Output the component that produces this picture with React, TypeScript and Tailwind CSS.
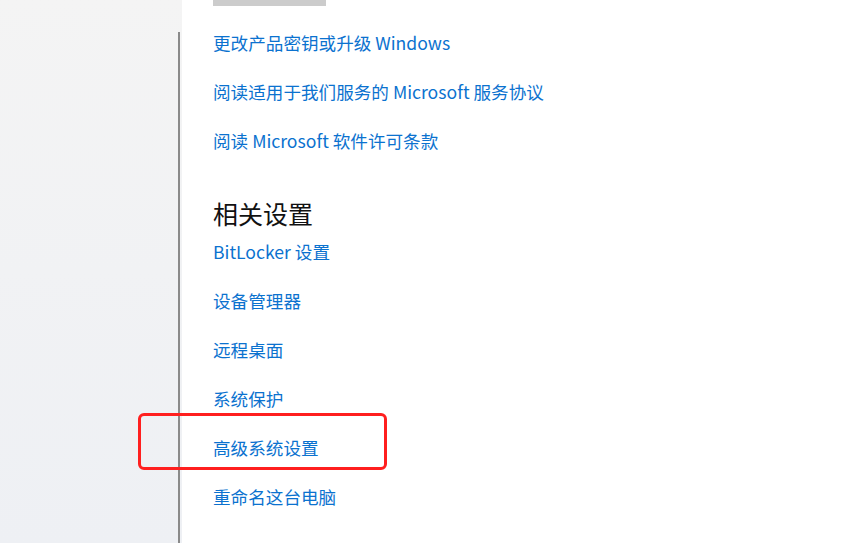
const topLinks = [
  "更改产品密钥或升级 Windows",
  "阅读适用于我们服务的 Microsoft 服务协议",
  "阅读 Microsoft 软件许可条款",
];

const related = [
  "BitLocker 设置",
  "设备管理器",
  "远程桌面",
  "系统保护",
  "高级系统设置",
  "重命名这台电脑",
];

function LinkRow({ label }: { label: string }) {
  return (
    <div className="h-[49px] flex items-center">
      <a className="text-[17.6px] leading-[24px] text-[#0b72cf] cursor-pointer hover:underline">
        {label}
      </a>
    </div>
  );
}

export default function App() {
  return (
    <div
      className="relative flex h-[543px] w-[855px] overflow-hidden bg-white"
      style={{ fontFamily: '"Noto Sans CJK SC", "Noto Sans", sans-serif' }}
    >
      {/* left nav pane */}
      <aside className="w-[182px] shrink-0 flex justify-end bg-linear-to-b from-[#f4f4f4] to-[#eef0f4]">
        <div className="mt-8 mr-[2px] w-[2px] bg-[#8a8a8a]" />
      </aside>

      <main className="flex-1 pl-[31px]">
        <div className="w-[113px] h-[6px] bg-[#cccccc]" />
        <div className="mt-[12px]">
          {topLinks.map((t) => (
            <LinkRow key={t} label={t} />
          ))}
        </div>
        <div className="h-[62px] pt-[35px]">
          <h2 className="text-[25px] leading-[26px] text-[#111] font-normal">相关设置</h2>
        </div>
        <div>
          {related.map((t) => (
            <LinkRow key={t} label={t} />
          ))}
        </div>
      </main>

      {/* annotation box */}
      <div className="absolute left-[138px] top-[413px] w-[249px] h-[57px] border-[3px] border-[#ff1f1f] rounded-[6px]" />
    </div>
  );
}
